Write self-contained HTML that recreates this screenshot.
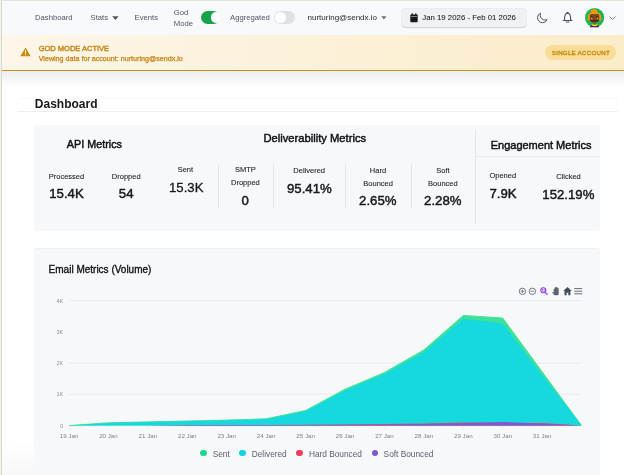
<!DOCTYPE html>
<html><head><meta charset="utf-8">
<style>
*{margin:0;padding:0;box-sizing:border-box;-webkit-font-smoothing:antialiased}
html,body{width:624px;height:475px;overflow:hidden;background:#fff;font-family:"Liberation Sans",sans-serif}
.a{position:absolute;white-space:nowrap;line-height:1}
#frame{position:absolute;left:0;top:0;width:624px;height:475px;overflow:hidden;background:#fff;will-change:transform}
#bl{position:absolute;left:0;top:0;width:1px;height:475px;background:#f2f1ec}
#bl2{position:absolute;left:1px;top:0;width:1px;height:475px;background:#d9d8d1}
#bt{position:absolute;left:0;top:0;width:624px;height:1px;background:#e4e3de}
#nav{position:absolute;left:2px;top:1px;width:622px;height:34px;background:#f8f9fb}
.nt{font-size:7.7px;color:#505665;margin-top:0.8px}
#banner{position:absolute;left:2px;top:35px;width:622px;height:35px;background:linear-gradient(90deg,#fdf6e9,#fbecc9)}
#bline{position:absolute;left:2px;top:69.8px;width:622px;height:1.2px;background:#cc9016}
#shadow{position:absolute;left:2px;top:71px;width:622px;height:16px;background:linear-gradient(#eceef1,#ffffff)}
.card{position:absolute;background:#f7f8fa;border-radius:3px}
.lbl{font-size:7.5px;color:#25282e;-webkit-text-stroke:0.1px #25282e;text-align:center}
.val{font-size:13.2px;color:#16181c;font-weight:normal;-webkit-text-stroke:0.45px #16181c;text-align:center}
.vd{position:absolute;width:1px;background:#e3e5e8}
.hd{font-size:11px;color:#0f1114;font-weight:normal;-webkit-text-stroke:0.45px #0f1114}
.yl{font-size:5.5px;color:#8c919b}
.xl{font-size:6.2px;color:#7c818c}
.lg{font-size:8.3px;color:#5a6070;margin-top:0.5px}
</style></head>
<body>
<div id="frame">
<div id="nav"></div>
<div id="bt"></div>
<div id="bl"></div><div id="bl2"></div>

<!-- nav items -->
<div class="a nt" style="left:35px;top:13.5px">Dashboard</div>
<div class="a nt" style="left:90.5px;top:13.5px">Stats</div>
<svg class="a" style="left:111.6px;top:15.7px" width="7" height="5" viewBox="0 0 7 5"><path d="M0.2 0.3H6.6L3.4 4.0Z" fill="#4f5563"/></svg>
<div class="a nt" style="left:134.6px;top:13.5px">Events</div>
<div class="a nt" style="left:173.8px;top:8.6px">God</div>
<div class="a nt" style="left:173.8px;top:19.5px">Mode</div>
<div class="a" style="left:200.9px;top:11.1px;width:19px;height:13px;border-radius:6.5px;background:#18a34a"></div>
<div class="a" style="left:210.7px;top:12.4px;width:10.4px;height:10.4px;border-radius:50%;background:#fff;box-shadow:0 0 0.6px rgba(0,0,0,.15)"></div>
<div class="a nt" style="left:230px;top:13.5px">Aggregated</div>
<div class="a" style="left:273.5px;top:11px;width:21px;height:13px;border-radius:7px;background:#dfe1e5"></div>
<div class="a" style="left:274.5px;top:12px;width:11px;height:11px;border-radius:50%;background:#fff"></div>
<div class="a" style="left:307.5px;top:13.5px;font-size:8px;color:#1f232a">nurturing@sendx.io</div>
<svg class="a" style="left:381px;top:15.8px" width="6" height="4" viewBox="0 0 6 4"><path d="M0.3 0.3H5.5L2.9 3.6Z" fill="#6b7280"/></svg>
<div class="a" style="left:401.5px;top:9px;width:124px;height:17.5px;border-radius:3px;background:#f0f1f3;box-shadow:0 0.5px 1px rgba(0,0,0,.12),0 0 0 0.5px #e3e5e8"></div>
<svg class="a" style="left:409.5px;top:13px" width="8" height="9.5" viewBox="0 0 8 9.5"><rect x="0.3" y="1.6" width="7.4" height="7.6" rx="0.8" fill="#16181c"/><rect x="1.6" y="0.3" width="1.2" height="2" fill="#16181c"/><rect x="5.2" y="0.3" width="1.2" height="2" fill="#16181c"/><rect x="0.9" y="3.4" width="6.2" height="0.5" fill="#f0f1f3"/></svg>
<div class="a" style="left:422.3px;top:13.6px;font-size:7.8px;color:#16181c;-webkit-text-stroke:0.05px #16181c">Jan 19 2026 - Feb 01 2026</div>
<!-- moon -->
<svg class="a" style="left:536.1px;top:12.3px" width="13" height="13" viewBox="0 0 13 13"><g transform="scale(0.51)"><path d="M21.752 15.002A9.72 9.72 0 0 1 18 15.75c-5.385 0-9.75-4.365-9.75-9.75 0-1.33.266-2.597.748-3.752A9.753 9.753 0 0 0 3 11.25C3 16.635 7.365 21 12.75 21a9.753 9.753 0 0 0 9.002-5.998Z" fill="none" stroke="#4b5260" stroke-width="1.9" stroke-linejoin="round"/></g></svg>
<!-- bell -->
<svg class="a" style="left:559px;top:9px" width="18" height="18" viewBox="0 0 18 18"><path d="M8.6 3.2C7.4 4 5.7 5.2 5.6 8V11L4.2 11.5H13L11.6 11V8C11.5 5.2 9.8 4 8.6 3.2Z" fill="none" stroke="#4b5260" stroke-width="1.1" stroke-linejoin="round"/><path d="M7.4 12.3V13.2H9.9V12.3" fill="none" stroke="#4b5260" stroke-width="0.9"/></svg>
<!-- avatar -->
<svg class="a" style="left:583px;top:6px" width="24" height="24" viewBox="0 0 24 24">
<circle cx="11.6" cy="11.6" r="9.6" fill="#1db550"/>
<rect x="10.4" y="2.3" width="1.6" height="1.6" fill="#f49a10"/>
<rect x="7.9" y="3.7" width="6.4" height="3" rx="1.4" fill="#f49a10"/>
<path d="M4.7 14.4V11C4.7 7.6 7.6 6 11.4 6C15.2 6 18.1 7.6 18.1 11V14.4Z" fill="#f49a10"/>
<path d="M6.7 9.6Q6.7 8 8.4 8H14.6Q16.3 8 16.3 9.6V13.6Q16.3 16.8 11.5 16.8Q6.7 16.8 6.7 13.6Z" fill="#7a4a1e"/>
<path d="M7.6 11.1H10M13.2 11.1H15.6" stroke="#2e1808" stroke-width="0.8"/>
<circle cx="8.7" cy="12.4" r="0.9" fill="#e2845e"/><circle cx="14.5" cy="12.4" r="0.9" fill="#e2845e"/>
<path d="M8.2 14L9.5 15.4L10.9 14.2L12.3 15.4L13.7 14.2L15 15.2" stroke="#1e0c03" stroke-width="0.95" fill="none"/>
<rect x="10.8" y="16.6" width="1.6" height="1.8" fill="#7d4b1f"/>
<path d="M7 21.3V20.2Q7.5 19.4 9 19.2H14.2Q15.7 19.4 15.9 20.2V21.3Z" fill="#5c1470"/>
<path d="M8.8 18.4Q11.6 20.6 14.4 18.4" stroke="#f2dc1c" stroke-width="1.3" fill="none"/>
</svg>
<svg class="a" style="left:608.5px;top:15.5px" width="7" height="4.5" viewBox="0 0 7 4.5"><path d="M0.6 0.6L3.5 3.5L6.4 0.6" fill="none" stroke="#6b7280" stroke-width="0.9"/></svg>

<!-- banner -->
<div id="banner"></div>
<div id="shadow"></div>
<div id="bline"></div>
<svg class="a" style="left:19.5px;top:47px" width="11" height="9.5" viewBox="0 0 11 9.5"><path d="M5.5 0.4L10.7 9.2H0.3Z" fill="#c98a10"/><rect x="5" y="3.2" width="1" height="3.2" fill="#fdf6e9"/><rect x="5" y="7.2" width="1" height="1" fill="#fdf6e9"/></svg>
<div class="a" style="left:38.7px;top:44.8px;font-size:7.5px;font-weight:normal;color:#c48510;-webkit-text-stroke:0.4px #c48510">GOD MODE ACTIVE</div>
<div class="a" style="left:38.7px;top:55.6px;font-size:7.15px;color:#c48510;-webkit-text-stroke:0.25px #c48510">Viewing data for account: nurturing@sendx.io</div>
<div class="a" style="left:545px;top:45px;width:71px;height:14.7px;border-radius:8px;background:#f7dd98"></div>
<div class="a" style="left:551.8px;top:49.6px;font-size:6.2px;letter-spacing:0.25px;font-weight:normal;color:#c4860c;-webkit-text-stroke:0.3px #c4860c">SINGLE ACCOUNT</div>

<!-- page header -->
<div class="a" style="left:17px;top:97.5px;width:600.5px;height:14px;border:1px solid #f8f9f9;border-bottom-color:#eceef0"></div>
<div class="a" style="left:34.8px;top:97.6px;font-size:12px;font-weight:bold;color:#17191d">Dashboard</div>

<!-- metrics card -->
<div class="card" style="left:34px;top:124.5px;width:566px;height:106px"></div>
<div class="a" style="left:35px;top:156.5px;width:120px;height:0.6px;background:#f4f5f7"></div>
<div class="a" style="left:476px;top:156px;width:124px;height:0.8px;background:#e8eaed"></div>
<div class="a hd" style="left:66.8px;top:139px;font-size:10.8px">API Metrics</div>
<div class="a hd" style="left:263.5px;top:132.5px;font-size:11.2px">Deliverability Metrics</div>
<div class="a hd" style="left:490.7px;top:139.8px">Engagement Metrics</div>
<div class="vd" style="left:475.3px;top:130px;height:94px"></div>
<div class="vd" style="left:217.5px;top:163.5px;height:44.5px"></div>
<div class="vd" style="left:273.3px;top:163.5px;height:44.5px"></div>
<div class="vd" style="left:345.2px;top:163.5px;height:44.5px"></div>
<div class="vd" style="left:410.5px;top:163.5px;height:44.5px"></div>

<div class="a lbl" style="left:26.45px;top:172.90px;width:80px;">Processed</div>
<div class="a val" style="left:26.50px;top:186.90px;width:80px;">15.4K</div>
<div class="a lbl" style="left:86.25px;top:172.90px;width:80px;">Dropped</div>
<div class="a val" style="left:86.15px;top:186.90px;width:80px;">54</div>
<div class="a lbl" style="left:145.35px;top:165.70px;width:80px;">Sent</div>
<div class="a val" style="left:146.25px;top:180.60px;width:80px;-webkit-text-stroke:0.3px #16181c;">15.3K</div>
<div class="a lbl" style="left:205.30px;top:165.80px;width:80px;">SMTP</div>
<div class="a lbl" style="left:205.40px;top:179.00px;width:80px;">Dropped</div>
<div class="a val" style="left:205.25px;top:193.90px;width:80px;">0</div>
<div class="a lbl" style="left:269.20px;top:166.80px;width:80px;">Delivered</div>
<div class="a val" style="left:269.35px;top:181.95px;width:80px;">95.41%</div>
<div class="a lbl" style="left:338.00px;top:166.50px;width:80px;">Hard</div>
<div class="a lbl" style="left:338.15px;top:180.10px;width:80px;">Bounced</div>
<div class="a val" style="left:337.75px;top:194.00px;width:80px;">2.65%</div>
<div class="a lbl" style="left:403.00px;top:166.50px;width:80px;">Soft</div>
<div class="a lbl" style="left:402.85px;top:180.10px;width:80px;">Bounced</div>
<div class="a val" style="left:402.75px;top:194.00px;width:80px;">2.28%</div>
<div class="a lbl" style="left:462.75px;top:172.10px;width:80px;">Opened</div>
<div class="a val" style="left:463.00px;top:187.00px;width:80px;">7.9K</div>
<div class="a lbl" style="left:528.50px;top:172.60px;width:80px;">Clicked</div>
<div class="a val" style="left:528.35px;top:187.80px;width:80px;">152.19%</div>

<!-- chart card -->
<div class="card" style="left:34px;top:248.4px;width:566px;height:240px;border-top:0.8px solid #eff0f2"></div>
<div class="a" style="left:48.6px;top:265px;font-size:10px;color:#121417;font-weight:normal;-webkit-text-stroke:0.35px #121417">Email Metrics (Volume)</div>
<div class="a" style="left:2px;top:420px;width:32px;height:55px;background:radial-gradient(ellipse 70px 40px at 20px 62px,rgba(0,0,0,0.04),rgba(0,0,0,0))"></div>
<svg class="a" style="left:0;top:0" width="624" height="475" viewBox="0 0 624 475">
<line x1="69" y1="300.6" x2="581.6" y2="300.6" stroke="#e6e8eb" stroke-width="0.8"/>
<line x1="69" y1="363.1" x2="581.6" y2="363.1" stroke="#e6e8eb" stroke-width="0.8"/>
<line x1="69" y1="394.35" x2="581.6" y2="394.35" stroke="#e6e8eb" stroke-width="0.8"/>
<line x1="69" y1="425.8" x2="581.6" y2="425.8" stroke="#e6e8eb" stroke-width="0.8"/>
<line x1="69.00" y1="426" x2="69.00" y2="428.6" stroke="#e3e5e8" stroke-width="0.6"/>
<line x1="108.43" y1="426" x2="108.43" y2="428.6" stroke="#e3e5e8" stroke-width="0.6"/>
<line x1="147.86" y1="426" x2="147.86" y2="428.6" stroke="#e3e5e8" stroke-width="0.6"/>
<line x1="187.29" y1="426" x2="187.29" y2="428.6" stroke="#e3e5e8" stroke-width="0.6"/>
<line x1="226.72" y1="426" x2="226.72" y2="428.6" stroke="#e3e5e8" stroke-width="0.6"/>
<line x1="266.15" y1="426" x2="266.15" y2="428.6" stroke="#e3e5e8" stroke-width="0.6"/>
<line x1="305.58" y1="426" x2="305.58" y2="428.6" stroke="#e3e5e8" stroke-width="0.6"/>
<line x1="345.02" y1="426" x2="345.02" y2="428.6" stroke="#e3e5e8" stroke-width="0.6"/>
<line x1="384.45" y1="426" x2="384.45" y2="428.6" stroke="#e3e5e8" stroke-width="0.6"/>
<line x1="423.88" y1="426" x2="423.88" y2="428.6" stroke="#e3e5e8" stroke-width="0.6"/>
<line x1="463.31" y1="426" x2="463.31" y2="428.6" stroke="#e3e5e8" stroke-width="0.6"/>
<line x1="502.74" y1="426" x2="502.74" y2="428.6" stroke="#e3e5e8" stroke-width="0.6"/>
<line x1="542.17" y1="426" x2="542.17" y2="428.6" stroke="#e3e5e8" stroke-width="0.6"/>
<polygon points="69.00,425.6 69.00,425.60 108.43,422.80 147.86,421.90 187.29,421.00 226.72,420.10 266.15,418.80 305.58,410.50 345.02,389.20 384.45,372.50 423.88,349.90 463.31,315.40 502.74,318.00 542.17,371.80 581.60,425.60 581.60,425.6" fill="#3fe09c"/>
<polyline points="69.00,425.60 108.43,422.80 147.86,421.90 187.29,421.00 226.72,420.10 266.15,418.80 305.58,410.50 345.02,389.20 384.45,372.50 423.88,349.90 463.31,315.40 502.74,318.00 542.17,371.80 581.60,425.60" fill="none" stroke="#46e39a" stroke-width="1.0" stroke-linejoin="round"/>
<polygon points="69.00,425.6 69.00,425.60 108.43,423.00 147.86,422.10 187.29,421.20 226.72,420.40 266.15,419.20 305.58,411.20 345.02,390.50 384.45,374.10 423.88,352.10 463.31,318.80 502.74,323.50 542.17,375.20 581.60,425.60 581.60,425.6" fill="#15d9de"/>
<polygon points="69.00,425.6 69.00,425.60 108.43,425.50 147.86,425.40 187.29,425.30 226.72,425.10 266.15,425.00 305.58,424.80 345.02,424.50 384.45,424.10 423.88,423.40 463.31,422.60 502.74,422.60 542.17,423.10 581.60,425.60 581.60,425.6" fill="#e8466a"/>
<polygon points="69.00,425.6 69.00,425.60 108.43,425.50 147.86,425.40 187.29,425.10 226.72,425.00 266.15,425.00 305.58,424.90 345.02,424.70 384.45,424.50 423.88,423.90 463.31,423.20 502.74,422.00 542.17,423.80 581.60,425.60 581.60,425.6" fill="#7d59d4"/>
</svg>
<div class="a yl" style="left:33px;top:298.60px;width:30.3px;text-align:right">4K</div>
<div class="a yl" style="left:33px;top:329.85px;width:30.3px;text-align:right">3K</div>
<div class="a yl" style="left:33px;top:361.10px;width:30.3px;text-align:right">2K</div>
<div class="a yl" style="left:33px;top:392.35px;width:30.3px;text-align:right">1K</div>
<div class="a yl" style="left:33px;top:423.60px;width:30.3px;text-align:right">0</div>
<div class="a xl" style="left:49.00px;top:433.3px;width:40px;text-align:center">19 Jan</div>
<div class="a xl" style="left:88.43px;top:433.3px;width:40px;text-align:center">20 Jan</div>
<div class="a xl" style="left:127.86px;top:433.3px;width:40px;text-align:center">21 Jan</div>
<div class="a xl" style="left:167.29px;top:433.3px;width:40px;text-align:center">22 Jan</div>
<div class="a xl" style="left:206.72px;top:433.3px;width:40px;text-align:center">23 Jan</div>
<div class="a xl" style="left:246.15px;top:433.3px;width:40px;text-align:center">24 Jan</div>
<div class="a xl" style="left:285.58px;top:433.3px;width:40px;text-align:center">25 Jan</div>
<div class="a xl" style="left:325.02px;top:433.3px;width:40px;text-align:center">26 Jan</div>
<div class="a xl" style="left:364.45px;top:433.3px;width:40px;text-align:center">27 Jan</div>
<div class="a xl" style="left:403.88px;top:433.3px;width:40px;text-align:center">28 Jan</div>
<div class="a xl" style="left:443.31px;top:433.3px;width:40px;text-align:center">29 Jan</div>
<div class="a xl" style="left:482.74px;top:433.3px;width:40px;text-align:center">30 Jan</div>
<div class="a xl" style="left:522.17px;top:433.3px;width:40px;text-align:center">31 Jan</div>
<!-- legend -->
<div class="a" style="left:200.4px;top:449.6px;width:6.8px;height:6.8px;border-radius:50%;background:#1fd68b"></div>
<div class="a lg" style="left:212.7px;top:449.4px">Sent</div>
<div class="a" style="left:239.1px;top:449.6px;width:6.8px;height:6.8px;border-radius:50%;background:#10d4e6"></div>
<div class="a lg" style="left:251.7px;top:449.4px">Delivered</div>
<div class="a" style="left:295.8px;top:449.6px;width:6.8px;height:6.8px;border-radius:50%;background:#f03d5f"></div>
<div class="a lg" style="left:308.9px;top:449.4px">Hard Bounced</div>
<div class="a" style="left:371.6px;top:449.6px;width:6.8px;height:6.8px;border-radius:50%;background:#7a58d8"></div>
<div class="a lg" style="left:383.6px;top:449.4px">Soft Bounced</div>
<!-- toolbar -->
<svg class="a" style="left:515px;top:284px" width="70" height="14" viewBox="0 0 70 14">
<circle cx="7.4" cy="7.3" r="3.2" fill="none" stroke="#646b78" stroke-width="0.9"/>
<path d="M5.6 7.3H9.2M7.4 5.5V9.1" stroke="#646b78" stroke-width="0.8"/>
<circle cx="17.4" cy="7.3" r="3.2" fill="none" stroke="#646b78" stroke-width="0.9"/>
<path d="M15.6 7.3H19.2" stroke="#646b78" stroke-width="0.8"/>
<circle cx="28.3" cy="6.3" r="2.5" fill="none" stroke="#8a3ee0" stroke-width="1.1"/>
<path d="M30.1 8.2L32.6 10.9" stroke="#8a3ee0" stroke-width="1.2"/>
<rect x="27.3" y="5.3" width="2" height="2" fill="none" stroke="#8a3ee0" stroke-width="0.5"/>
<path d="M38.6 9.8V5.4Q38.8 4.5 39.6 4.7V7L39.7 3.6Q40.4 3 41 3.6V6.4L41.1 3.1Q41.9 2.6 42.4 3.3V6.6L42.6 4Q43.3 3.6 43.7 4.2V10Q43.7 11.3 42.4 11.3H40Q39.2 11.3 38.7 10.6L37.2 8.4Q37.4 7.7 38.1 8.1Z" fill="#5b6270"/>
<path d="M52.5 3L48.2 7H49.5V11.2H51.6V8.7H53.3V11.2H55.4V7H56.8Z" fill="#454d5a"/>
<path d="M59.2 4.6H67.2M59.2 7.2H67.2M59.2 9.8H67.2" stroke="#656c79" stroke-width="1"/>
</svg>

</div>
</body></html>
